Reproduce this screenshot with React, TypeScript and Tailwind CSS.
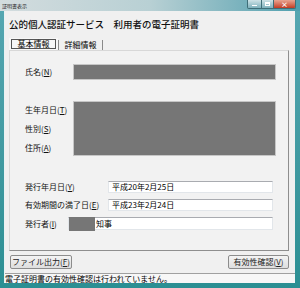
import React from "react";

const JP = "font-['MS_UI_Gothic','Noto_Sans_CJK_JP',sans-serif]";

function Field({ children, className }: { children?: React.ReactNode; className?: string }) {
  return (
    <div
      className={`flex items-center border border-[#e2e6ea] border-t-[#a9abb0] bg-white pl-[3px] text-[8px] leading-none text-black ${className ?? ""}`}
    >
      {children}
    </div>
  );
}

function Redacted({ className }: { className?: string }) {
  return <div className={`border border-[#c6c6c6] bg-[#767676] ${className ?? ""}`} />;
}

function Button({ children, className }: { children: React.ReactNode; className?: string }) {
  return (
    <button
      className={`flex h-[14px] items-center justify-center rounded-[2px] border border-[#8c8c8c] bg-gradient-to-b from-[#f4f4f4] to-[#dedede] text-[8px] leading-none text-[#222] ${className ?? ""}`}
    >
      {children}
    </button>
  );
}

export default function App() {
  return (
    <div className={`flex h-[288px] w-[300px] flex-col bg-gradient-to-b from-[#56a7b2] to-[#2b8f93] ${JP}`}>
      {/* Title bar */}
      <div className="flex h-[11px] shrink-0 items-start bg-gradient-to-r from-[#d3dcde] via-[#b8d0d4] to-[#4c9fae]">
        <span className="ml-[2px] mt-[3px] text-[5px] leading-none text-[#222]">証明書表示</span>
        <div className="ml-auto mr-[4px] flex h-[9px] overflow-hidden rounded-b-[2px] border border-t-0 border-[#3f6e78]">
          <div className="flex w-[13px] items-end justify-center bg-gradient-to-b from-[#cfe3e7] to-[#7fb2bd] pb-[2px]">
            <div className="h-[1.5px] w-[5px] bg-white" />
          </div>
          <div className="flex w-[12px] items-center justify-center border-l border-[#3f6e78] bg-gradient-to-b from-[#cfe3e7] to-[#7fb2bd]">
            <div className="h-[4px] w-[5px] border border-t-2 border-white" />
          </div>
          <div className="flex w-[22px] items-center justify-center border-l border-[#3f6e78] bg-gradient-to-b from-[#e8a491] to-[#c23a22] text-[7px] font-bold leading-none text-white">
            ×
          </div>
        </div>
      </div>

      {/* Client area */}
      <div className="mx-[5px] flex h-[272px] flex-col bg-[#f0f0f0] shadow-[-1px_0_0_#e8f2f3]">
        <h1 className="ml-[4px] mt-[8px] text-[9.5px] font-medium leading-[10px] tracking-[0px] text-[#111]">
          公的個人認証サービス　利用者の電子証明書
        </h1>

        {/* Tabs */}
        <div className="ml-[4px] mt-[9px] flex h-[12px] items-end">
          <div className="flex h-[12px] w-[49px] items-start justify-center bg-[#f7f7f7] pt-[1px]">
            <div className="flex h-[10px] w-[45px] items-center justify-center border border-[#555] text-[8px] leading-none text-black">
              基本情報
            </div>
          </div>
          <div className="flex h-[10px] w-[45px] items-center justify-center border-x border-[#8a8a8a] text-[8px] leading-none text-black">
            詳細情報
          </div>
        </div>

        {/* Tab page */}
        <div className="ml-[4px] h-[201px] w-[280px] border border-[#d8d8d8] border-b-[#8e8e8e] border-r-[#8e8e8e] bg-[#f2f2f2] pl-[15px] text-[8px] leading-none text-[#111]">
          <div className="mt-[13px] flex items-center">
            <span className="w-[48px]">氏名(<span className="underline">N</span>)</span>
            <Redacted className="h-[16px] w-[203px]" />
          </div>

          <div className="mt-[21px] flex">
            <div className="flex w-[48px] flex-col pt-[5px]">
              <span className="h-[19px]">生年月日(<span className="underline">T</span>)</span>
              <span className="h-[19px]">性別(<span className="underline">S</span>)</span>
              <span>住所(<span className="underline">A</span>)</span>
            </div>
            <Redacted className="h-[55px] w-[203px]" />
          </div>

          <div className="mt-[25px] flex items-center">
            <span className="w-[83px]">発行年月日(<span className="underline">Y</span>)</span>
            <Field className="h-[12px] w-[165px]">平成20年2月25日</Field>
          </div>

          <div className="mt-[6px] flex items-center">
            <span className="w-[83px]">有効期間の満了日(<span className="underline">E</span>)</span>
            <Field className="h-[12px] w-[165px]">平成23年2月24日</Field>
          </div>

          <div className="mt-[6px] flex items-center">
            <span className="w-[43px]">発行者(<span className="underline">I</span>)</span>
            <Field className="h-[13px] w-[205px] !pl-0">
              <div className="h-[14px] w-[26px] bg-[#767676]" />
              <span className="ml-[1px]">知事</span>
            </Field>
          </div>
        </div>

        {/* Buttons */}
        <div className="mt-[4px] flex h-[14px] items-center pl-[5px] pr-[6px]">
          <Button className="w-[62px]">
            ファイル出力(<span className="underline">F</span>)
          </Button>
          <Button className="ml-auto w-[61px]">
            有効性確認(<span className="underline">V</span>)
          </Button>
        </div>

        {/* Status bar */}
        <div className="mt-auto flex h-[10px] items-center border-t border-[#a0a0a0] bg-[#f7f7f7] text-[8px] leading-none text-black">
          電子証明書の有効性確認は行われていません。
        </div>
      </div>
    </div>
  );
}
